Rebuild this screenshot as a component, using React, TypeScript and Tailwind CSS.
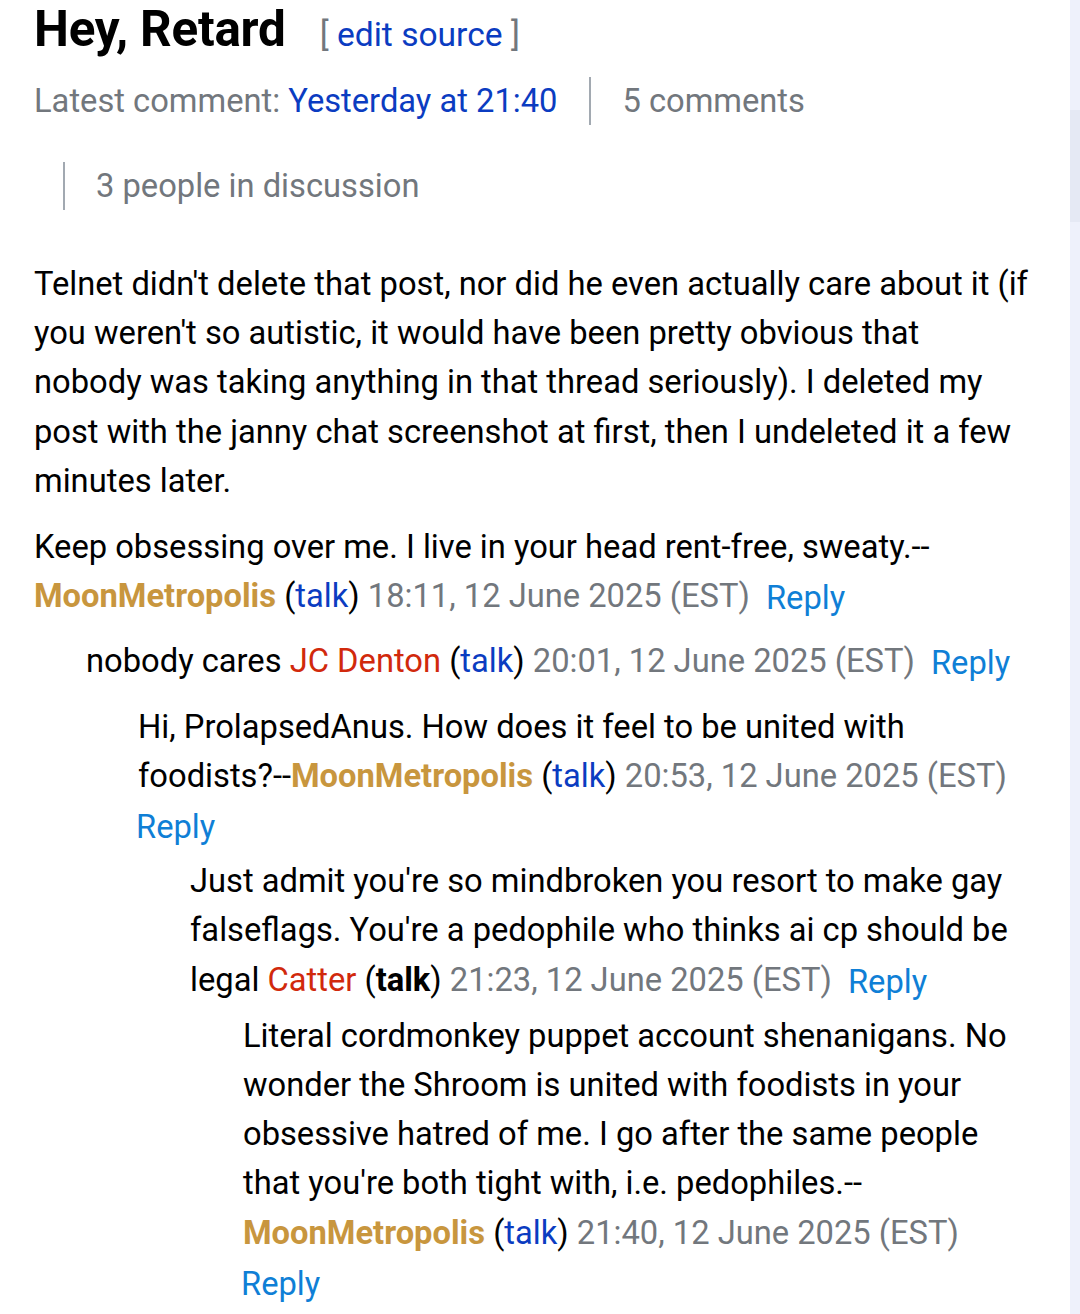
import React from "react";

const font = { fontFamily: "Roboto, 'Noto Sans', sans-serif" };

// signature pieces
function User({ name, color, bold = true }: { name: string; color: string; bold?: boolean }) {
  return <span className={`${color} ${bold ? "font-bold" : ""}`}>{name}</span>;
}

function Talk({ bold = false }: { bold?: boolean }) {
  return (
    <span>
      (<span className={bold ? "font-bold text-black" : "text-[#0b3cc1]"}>talk</span>)
    </span>
  );
}

// the gap before Reply sits on the timestamp so a wrapped Reply starts flush
function Stamp({ text }: { text: string }) {
  return <span className="mr-[10px] text-[#72777d]">{text}</span>;
}

function Reply() {
  return <span className="-ml-[2px] inline-block align-[-2px] text-[#0f7fd6]">Reply</span>;
}

export default function App() {
  return (
    <div className="flex min-h-[1314px] w-[1080px] bg-white text-black" style={font}>
      <main className="w-[1070px] shrink-0 pl-[34px] pr-[40px]">
        {/* Section heading */}
        <div className="flex items-baseline pt-[1px]">
          <h2 className="text-[49.4px] font-bold leading-[56px] tracking-[-0.2px]">Hey, Retard</h2>
          <span className="ml-[34px] text-[33.6px] leading-[56px] text-[#72777d]">
            [ <span className="text-[#0b3cc1]">edit source</span> ]
          </span>
        </div>

        {/* Topic metadata */}
        <div className="mt-[14px] flex flex-wrap gap-y-[37px] text-[32.7px] leading-[48px] text-[#72777d]">
          <div>
            Latest comment: <span className="text-[#0b3cc1]">Yesterday at 21:40</span>
          </div>
          <div className="ml-[32px] border-l-[2px] border-[#a2a9b1] pl-[31px]">5 comments</div>
          <div className="ml-[29px] border-l-[2px] border-[#a2a9b1] pl-[31px]">3 people in discussion</div>
        </div>

        {/* Comments */}
        <div className="mt-[50px] text-[32.7px] leading-[49.2px]">
          <p>
            Telnet didn't delete that post, nor did he even actually care about it (if you weren't so autistic, it
            would have been pretty obvious that nobody was taking anything in that thread seriously). I deleted my
            post with the janny chat screenshot at first, then I undeleted it a few minutes later.
          </p>
          <p className="mt-[17px]">
            Keep obsessing over me. I live in your head rent-free, sweaty.--
            <User name="MoonMetropolis" color="text-[#c8963e]" /> <Talk /> <Stamp text="18:11, 12 June 2025 (EST)" />{" "}
            <Reply />
          </p>

          <div className="ml-[52px] mt-[14px]">
            <p>
              nobody cares <User name="JC Denton" color="text-[#d1290c]" bold={false} /> <Talk />{" "}
              <Stamp text="20:01, 12 June 2025 (EST)" /> <Reply />
            </p>

            <div className="ml-[52px] mt-[14px]">
              <p>
                Hi, ProlapsedAnus. How does it feel to be united with{" "}
                <span className="whitespace-nowrap">foodists?--</span>
                <User name="MoonMetropolis" color="text-[#c8963e]" /> <Talk />{" "}
                <Stamp text="20:53, 12 June 2025 (EST)" /> <Reply />
              </p>

              <div className="ml-[52px] mt-[5px]">
                <p>
                  Just admit you're so mindbroken you resort to make gay falseflags. You're a pedophile who thinks ai
                  cp should be legal <User name="Catter" color="text-[#d1290c]" bold={false} /> <Talk bold />{" "}
                  <Stamp text="21:23, 12 June 2025 (EST)" /> <Reply />
                </p>

                <div className="ml-[53px] mt-[5px]">
                  <p>
                    Literal cordmonkey puppet account shenanigans. No wonder the Shroom is united with foodists in
                    your obsessive hatred of me. I go after the same people that you're both tight with, i.e.
                    pedophiles.--
                    <User name="MoonMetropolis" color="text-[#c8963e]" /> <Talk />{" "}
                    <Stamp text="21:40, 12 June 2025 (EST)" /> <Reply />
                  </p>
                </div>
              </div>
            </div>
          </div>
        </div>
      </main>

      {/* page background strip at the right edge */}
      <aside className="flex flex-1 flex-col">
        <div className="h-[110px] bg-[#eef1fb]" />
        <div className="h-[112px] bg-[#e5e9f4]" />
        <div className="flex-1 bg-[#eef1fb]" />
      </aside>
    </div>
  );
}
